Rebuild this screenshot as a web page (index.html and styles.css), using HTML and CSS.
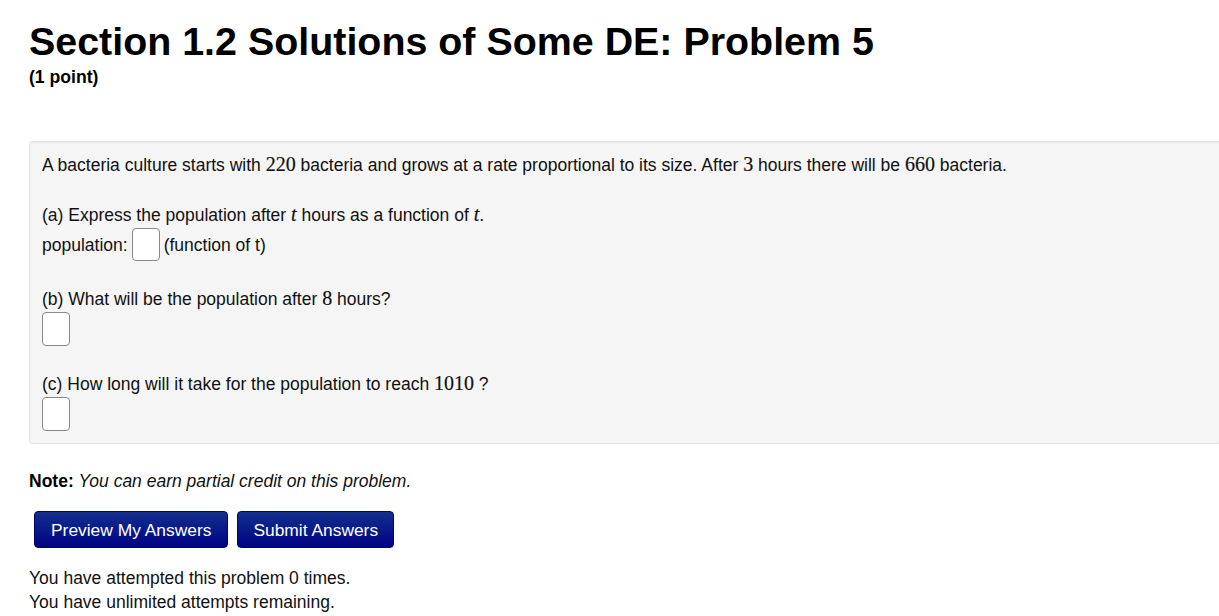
FILE: index.html
```html
<!DOCTYPE html>
<html lang="en">
<head>
<meta charset="utf-8">
<title>Section 1.2 Solutions of Some DE: Problem 5</title>
<link rel="stylesheet" href="styles.css">
</head>
<body>
<div class="page">
  <h1 class="title">Section 1.2 Solutions of Some DE: Problem 5</h1>
  <div class="points">(1 point)</div>

  <div class="well">
    <p class="line">A bacteria culture starts with <span class="m">220</span> bacteria and grows at a rate proportional to its size. After <span class="m">3</span> hours there will be <span class="m">660</span> bacteria.</p>

    <div class="part">
      <p class="line">(a) Express the population after <span class="mi">t</span> hours as a function of <span class="mi">t</span>.</p>
      <div class="answer-row">
        <span class="line">population:</span>
        <input class="ans" type="text" aria-label="population">
        <span class="line">(function of t)</span>
      </div>
    </div>

    <div class="part">
      <p class="line">(b) What will be the population after <span class="m">8</span> hours?</p>
      <div class="answer-row">
        <input class="ans tall" type="text" aria-label="population after 8 hours">
      </div>
    </div>

    <div class="part">
      <p class="line">(c) How long will it take for the population to reach <span class="m">1010</span> ?</p>
      <div class="answer-row">
        <input class="ans tall" type="text" aria-label="time to reach 1010">
      </div>
    </div>
  </div>

  <p class="note line"><b>Note:</b> <i>You can earn partial credit on this problem.</i></p>

  <div class="buttons">
    <button class="btn" type="button">Preview My Answers</button>
    <button class="btn" type="button">Submit Answers</button>
  </div>

  <div class="attempts">
    <p class="line">You have attempted this problem 0 times.</p>
    <p class="line">You have unlimited attempts remaining.</p>
  </div>
</div>
</body>
</html>
```

FILE: styles.css
```css
html, body {
  margin: 0;
  padding: 0;
  background: #ffffff;
  overflow: hidden;
}

body {
  font-family: "Liberation Sans", Arial, sans-serif;
  font-size: 17.5px;
  color: #000000;
}

.page {
  padding: 19px 0 0 29px;
}

.title {
  margin: 0;
  font-size: 39.4px;
  line-height: 45px;
  font-weight: bold;
}

.points {
  margin-top: 3px;
  font-size: 17.6px;
  line-height: 20px;
  font-weight: bold;
}

.line {
  margin: 0;
  line-height: 24px;
  color: #111111;
}

.m {
  font-family: "Liberation Serif", "Times New Roman", serif;
  font-size: 20px;
  line-height: 1;
  -webkit-text-stroke: 0.2px #111111;
}

.mi {
  font-family: "Liberation Serif", "Times New Roman", serif;
  font-style: italic;
  font-size: 20px;
  line-height: 1;
  -webkit-text-stroke: 0.2px #111111;
}

.well {
  margin-top: 54px;
  background: #f5f5f5;
  border: 1px solid #e3e3e3;
  border-right: none;
  border-radius: 4px 0 0 4px;
  box-shadow: inset 0 1px 1px rgba(0, 0, 0, 0.05);
  padding: 11px 0 12px 12px;
}

.part {
  margin-top: 26px;
}

.answer-row {
  display: flex;
  align-items: center;
  gap: 4px;
  margin-top: 1px;
}

.ans {
  box-sizing: border-box;
  width: 28px;
  height: 33px;
  margin: 0;
  padding: 0;
  background: #ffffff;
  border: 1px solid #888888;
  border-radius: 4px;
}

.ans.tall {
  width: 28px;
  height: 34px;
}

.note {
  margin-top: 25px;
}

.note b {
  color: #000000;
}

.buttons {
  display: flex;
  gap: 9px;
  margin-top: 18px;
  padding-left: 5px;
}

.btn {
  height: 37px;
  padding: 0 16px;
  margin: 0;
  border: 1px solid #00065e;
  border-radius: 4px;
  background: linear-gradient(to bottom, #132f8d 0%, #000385 100%);
  color: #ffffff;
  font-family: "Liberation Sans", Arial, sans-serif;
  font-size: 17.4px;
  line-height: 24px;
}

.btn + .btn {
  padding: 0 15px;
}

.attempts {
  margin-top: 18px;
}
```
